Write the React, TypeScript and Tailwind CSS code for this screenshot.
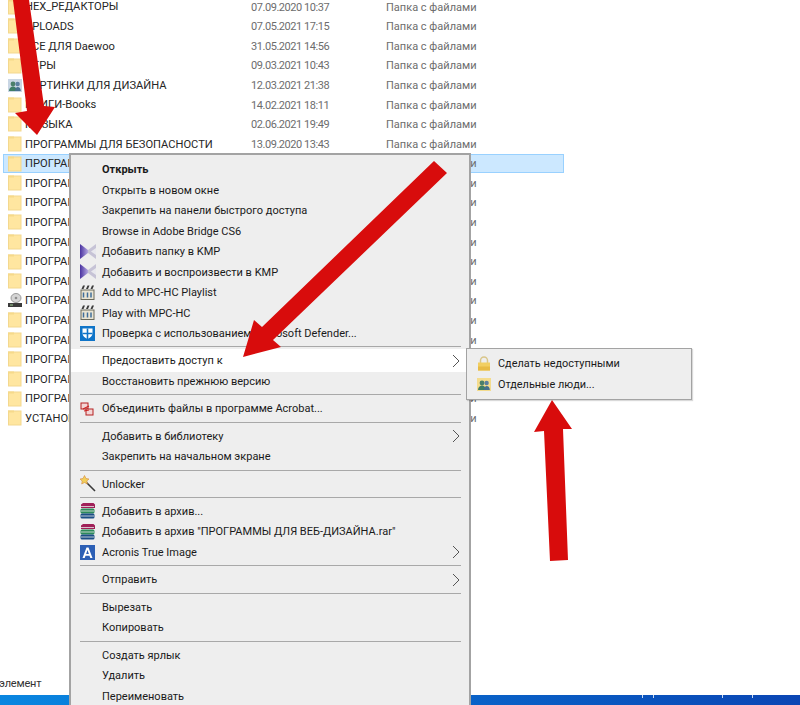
import React from 'react'

type FileRow = { name: string; date: string; icon?: 'folder' | 'people' | 'disk'; selected?: boolean }

const rows: FileRow[] = [
  { name: 'HEX_РЕДАКТОРЫ', date: '07.09.2020 10:37' },
  { name: 'UPLOADS', date: '07.05.2021 17:15' },
  { name: 'ВСЕ ДЛЯ Daewoo', date: '31.05.2021 14:56' },
  { name: 'ИГРЫ', date: '09.03.2021 10:43' },
  { name: 'КАРТИНКИ ДЛЯ ДИЗАЙНА', date: '12.03.2021 21:38', icon: 'people' },
  { name: 'КНИГИ-Books', date: '14.02.2021 18:11' },
  { name: 'МУЗЫКА', date: '02.06.2021 19:49' },
  { name: 'ПРОГРАММЫ ДЛЯ БЕЗОПАСНОСТИ', date: '13.09.2020 13:43' },
  { name: 'ПРОГРАММЫ ДЛЯ ВЕБ-ДИЗАЙНА', date: '13.09.2020 13:43', selected: true },
  { name: 'ПРОГРАММЫ ДЛЯ ВИДЕО', date: '13.09.2020 13:43' },
  { name: 'ПРОГРАММЫ ДЛЯ ГРАФИКИ', date: '13.09.2020 13:43' },
  { name: 'ПРОГРАММЫ ДЛЯ ДИСКОВ', date: '13.09.2020 13:43' },
  { name: 'ПРОГРАММЫ ДЛЯ ДОКУМЕНТОВ', date: '13.09.2020 13:43' },
  { name: 'ПРОГРАММЫ ДЛЯ ЗВУКА', date: '13.09.2020 13:43' },
  { name: 'ПРОГРАММЫ ДЛЯ ИНТЕРНЕТА', date: '13.09.2020 13:43' },
  { name: 'ПРОГРАММЫ ДЛЯ ОБРАЗОВ', date: '13.09.2020 13:43', icon: 'disk' },
  { name: 'ПРОГРАММЫ ДЛЯ ОФИСА', date: '13.09.2020 13:43' },
  { name: 'ПРОГРАММЫ ДЛЯ СЕТИ', date: '13.09.2020 13:43' },
  { name: 'ПРОГРАММЫ ДЛЯ СИСТЕМЫ', date: '13.09.2020 13:43' },
  { name: 'ПРОГРАММЫ ДЛЯ ТЕЛЕФОНА', date: '13.09.2020 13:43' },
  { name: 'ПРОГРАММЫ РАЗНЫЕ', date: '13.09.2020 13:43' },
  { name: 'УСТАНОВКИ', date: '13.09.2020 13:43' },
]

const FolderIcon = () => (
  <svg width="14" height="16" viewBox="0 0 14 16" className="shrink-0">
    <rect x="0.500" y="1" width="12.500" height="14" fill="#ffe6a0" stroke="#f3d88f" strokeWidth="1" />
    <rect x="0" y="0.500" width="6" height="2" fill="#f6d98a" />
  </svg>
)

const PeopleIcon = ({ bg }: { bg?: boolean }) => (
  <svg width="14" height="15" viewBox="0 0 14 15" className="shrink-0">
    <rect x="0" y="1" width="14" height="13" fill={bg ? '#f4dc8e' : '#c9d6e4'} />
    <circle cx="5" cy="6" r="2.400" fill="#4b7f6a" />
    <circle cx="9.600" cy="6" r="2.200" fill="#5b7fa0" />
    <path d="M1 13c0-3 2-4.500 4-4.500s4 1.500 4 4.500z" fill="#3f7d66" />
    <path d="M7 13c0-2.500 1.300-4 2.800-4s3 1.500 3 4z" fill="#46708f" />
  </svg>
)

const DiskIcon = () => (
  <svg width="14" height="15" viewBox="0 0 14 15" className="shrink-0">
    <ellipse cx="8" cy="5" rx="5" ry="4.500" fill="#d5d5d5" stroke="#9a9a9a" />
    <circle cx="8" cy="5" r="1.300" fill="#8f8f8f" />
    <rect x="0" y="10" width="14" height="4" fill="#3b3b3b" />
    <rect x="2" y="11.500" width="3" height="1" fill="#9fd08f" />
  </svg>
)

const KmpIcon = () => (
  <svg width="16" height="15" viewBox="0 0 16 15">
    <defs>
      <linearGradient id="kmpLeft" x1="0" x2="1" y1="0" y2="0">
        <stop offset="0" stopColor="#4a33a0" />
        <stop offset="1" stopColor="#b3a6e0" />
      </linearGradient>
    </defs>
    <path d="M0 0L8 6V9L0 15z" fill="url(#kmpLeft)" />
    <path d="M16 0L8 6V9L16 15z" fill="#c6c3d6" />
    <path d="M16 4L11 7.500L16 11z" fill="#e8e8ee" />
  </svg>
)

const MpcIcon = () => (
  <svg width="15" height="15" viewBox="0 0 15 15">
    <rect x="1" y="5" width="13" height="9.500" fill="#e9e4d3" stroke="#6a6a5c" strokeWidth="1" />
    <path d="M1.500 4L3 0.500h2L3.500 4zM6 4L7.500 0.500h2L8 4zM10.500 4L12 0.500h2L12.500 4z" fill="#3c3c3c" />
    <path d="M3.500 7.500v5M7.500 7.500v5M11 7.500v5" stroke="#3f6d9a" strokeWidth="1.500" />
  </svg>
)

const DefenderIcon = () => (
  <svg width="15" height="15" viewBox="0 0 15 15">
    <rect width="15" height="15" fill="#0f74c8" />
    <path d="M2.500 2.500h10v5c0 2.800-2.400 4.200-5 5.500-2.600-1.300-5-2.700-5-5.500z" fill="#ffffff" />
    <path d="M6.700 2.500h1.600V13h-1.600zM2.500 6.700h10v1.600h-10z" fill="#0f74c8" />
  </svg>
)

const AcrobatIcon = () => (
  <svg width="14" height="14" viewBox="0 0 14 14">
    <rect x="1" y="1" width="7" height="6" fill="#f3d6d6" stroke="#b52020" />
    <rect x="6" y="7" width="7" height="6" fill="#f3d6d6" stroke="#b52020" />
    <path d="M3 7L9 4M4 9l5-1" stroke="#cc2222" strokeWidth="1.200" />
  </svg>
)

const WandIcon = () => (
  <svg width="16" height="17" viewBox="0 0 16 17">
    <path d="M6 7L15 16" stroke="#3a3a3a" strokeWidth="1.600" />
    <path d="M4.500 0.500L6 3.500L9 4L6.800 6L7.300 9L4.500 7.500L1.700 9L2.200 6L0 4L3 3.500z" fill="#f2cf5a" stroke="#d58a3c" strokeWidth="0.600" />
  </svg>
)

const RarIcon = () => (
  <svg width="15" height="16" viewBox="0 0 15 16">
    <path d="M1 1.500L3 0H13.500L15 1.500V5H1z" fill="#a02058" />
    <rect x="0.500" y="5.500" width="14" height="5" rx="1.500" fill="#2c8a5a" />
    <rect x="0.500" y="10.500" width="14" height="5" rx="1.500" fill="#1c4f86" />
    <path d="M1 3.500h13M1 8h13M1 13h13" stroke="#e8e8e8" strokeWidth="0.800" />
  </svg>
)

const AcronisIcon = () => (
  <svg width="15" height="15" viewBox="0 0 15 15">
    <rect width="15" height="15" fill="#2c5fb5" />
    <path d="M2.500 13L6.500 2.500h2L12.500 13h-2.200l-0.800-2.300h-4L4.700 13zM6.100 9h2.800L7.500 5z" fill="#ffffff" />
  </svg>
)

const LockIcon = () => (
  <svg width="14" height="15" viewBox="0 0 14 15">
    <path d="M3.500 7V4.500a3.500 3.500 0 0 1 7 0V7" fill="none" stroke="#d9c68a" strokeWidth="1.500" />
    <rect x="1" y="6.500" width="12" height="8" fill="#f2cf62" />
    <rect x="1" y="10.500" width="12" height="4" fill="#e8bb45" />
  </svg>
)

type MenuEntry =
  | { sep: true }
  | { label: string; bold?: boolean; icon?: React.ReactNode; arrow?: boolean; active?: boolean; sep?: false }

const menu: MenuEntry[] = [
  { label: 'Открыть', bold: true },
  { label: 'Открыть в новом окне' },
  { label: 'Закрепить на панели быстрого доступа' },
  { label: 'Browse in Adobe Bridge CS6' },
  { label: 'Добавить папку в KMP', icon: <KmpIcon /> },
  { label: 'Добавить и воспроизвести в KMP', icon: <KmpIcon /> },
  { label: 'Add to MPC-HC Playlist', icon: <MpcIcon /> },
  { label: 'Play with MPC-HC', icon: <MpcIcon /> },
  { label: 'Проверка с использованием Microsoft Defender...', icon: <DefenderIcon /> },
  { sep: true },
  { label: 'Предоставить доступ к', arrow: true, active: true },
  { label: 'Восстановить прежнюю версию' },
  { sep: true },
  { label: 'Объединить файлы в программе Acrobat...', icon: <AcrobatIcon /> },
  { sep: true },
  { label: 'Добавить в библиотеку', arrow: true },
  { label: 'Закрепить на начальном экране' },
  { sep: true },
  { label: 'Unlocker', icon: <WandIcon /> },
  { sep: true },
  { label: 'Добавить в архив...', icon: <RarIcon /> },
  { label: 'Добавить в архив "ПРОГРАММЫ ДЛЯ ВЕБ-ДИЗАЙНА.rar"', icon: <RarIcon /> },
  { label: 'Acronis True Image', icon: <AcronisIcon />, arrow: true },
  { sep: true },
  { label: 'Отправить', arrow: true },
  { sep: true },
  { label: 'Вырезать' },
  { label: 'Копировать' },
  { sep: true },
  { label: 'Создать ярлык' },
  { label: 'Удалить' },
  { label: 'Переименовать' },
]

const Chevron = () => (
  <svg width="8" height="14" viewBox="0 0 8 14" className="shrink-0">
    <path d="M1 1l6 6-6 6" fill="none" stroke="#555" strokeWidth="1" />
  </svg>
)

export default function App() {
  return (
    <div className="relative flex h-[705px] w-[800px] flex-col overflow-hidden bg-white font-['Roboto','Open_Sans',sans-serif] text-[11px]">
      {/* список файлов */}
      <div className="-mt-[3px] flex flex-col pl-[3px]">
        {rows.map((r) => (
          <div
            key={r.name}
            className={`flex h-[19.6px] w-[561px] items-center border pl-[4px] ${
              r.selected ? 'border-[#99d1ff] bg-[#cce8ff]' : 'border-transparent'
            }`}
          >
            <span className="flex w-[17px] shrink-0">
              {r.icon === 'people' ? <PeopleIcon /> : r.icon === 'disk' ? <DiskIcon /> : <FolderIcon />}
            </span>
            <span className="w-[226px] shrink-0 truncate pt-[2px] text-[11.150px] text-[#262626]">{r.name}</span>
            <span className="w-[135px] shrink-0 pt-[2px] tracking-[-0.45px] text-[#6d6d6d]">{r.date}</span>
            <span className="pt-[2px] text-[#6d6d6d]">Папка с файлами</span>
          </div>
        ))}
      </div>

      <div className="flex-1" />
      <div className="h-[22px] pt-[1px] leading-[20px] -indent-[1px] tracking-[-0.2px] text-[#333]">элемент</div>
      <div className="flex h-[10px] items-start bg-gradient-to-r from-[#0a86e0] via-[#0a68cc] to-[#0b46b4] pl-[642px]">
        <span className="h-[3px] w-[1px] bg-white/80" />
        <span className="ml-[10px] h-[3px] w-[1px] bg-white/80" />
        <span className="ml-[68px] h-[3px] w-[1px] bg-white/80" />
        <span className="ml-[29px] h-[3px] w-[1px] bg-white/80" />
      </div>

      {/* контекстное меню */}
      <div className="absolute left-[69px] top-[153px] h-[570px] w-[402px] border-2 border-[#a3a3a3] bg-[#eeeeee] py-[4px] text-[#1a1a1a]">
        {menu.map((m, i) =>
          m.sep ? (
            <div key={i} className="flex h-[6.900px] items-center pl-[9px] pr-[8px]">
              <div className="h-px w-full bg-[#a8a8a8]" />
            </div>
          ) : (
            <div
              key={i}
              className={`flex items-center ${
                m.active ? '-my-[1px] h-[22.500px] bg-white' : 'h-[20.500px]'
              } pr-[9px]`}
            >
              <span className="flex w-[31px] shrink-0 justify-start pl-[9px]">{m.icon}</span>
              <span className={`flex-1 whitespace-nowrap pt-[2px] ${m.bold ? 'font-bold' : ''}`}>{m.label}</span>
              {m.arrow && <Chevron />}
            </div>
          )
        )}
      </div>

      {/* подменю */}
      <div className="absolute left-[466px] top-[348px] w-[226px] border border-[#a3a3a3] bg-[#eeeeee] py-[4px] text-[10.900px] text-[#1a1a1a] shadow-[1px_1px_1px_rgba(0,0,0,0.15)]">
        <div className="flex h-[21px] items-center pl-[10px]">
          <span className="flex w-[21px] shrink-0"><LockIcon /></span>
          <span className="pt-[2px]">Сделать недоступными</span>
        </div>
        <div className="flex h-[21px] items-center pl-[10px]">
          <span className="flex w-[21px] shrink-0"><PeopleIcon bg /></span>
          <span className="pt-[2px]">Отдельные люди...</span>
        </div>
      </div>

      {/* красные стрелки */}
      <svg width="800" height="705" viewBox="0 0 800 705" className="pointer-events-none absolute left-0 top-0">
        <polygon fill="#d80c0c" points="13,0 29,0 44,106 55,107 37,135 15,113 27,111" />
        <polygon fill="#d80c0c" points="434,161 447,173 273,340 281,347 243,357 254,320 262,327" />
        <polygon fill="#d80c0c" points="552,400 572,429 563,429 568,560 550,561 544,431 534,432" />
      </svg>
    </div>
  )
}
